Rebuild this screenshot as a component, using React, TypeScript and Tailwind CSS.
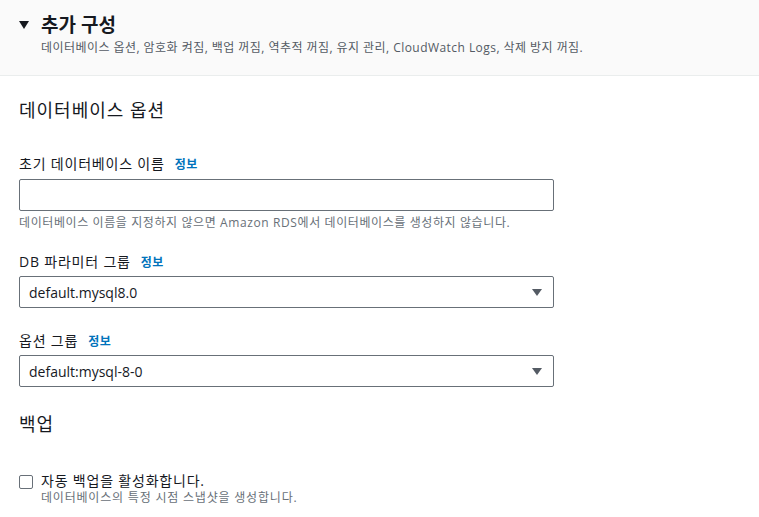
import React from "react";

const font = { fontFamily: '"Open Sans", "Noto Sans CJK KR", sans-serif' };

function InfoLink() {
  return <span className="ml-[10px] text-[12px] font-bold tracking-[0.5px] text-[#0073bb]">정보</span>;
}

function Label({ children }: { children: React.ReactNode }) {
  return (
    <div className="flex items-baseline h-[20px] leading-[20px] text-[14px] tracking-[0.8px] text-[#16191f]">
      {children}
      <InfoLink />
    </div>
  );
}

function SelectBox({ value }: { value: string }) {
  return (
    <div className="mt-[4px] flex h-[32px] w-[535px] items-center justify-between rounded-[2px] border border-[#687078] bg-white pl-[9px] pr-[11px] text-[14px] text-[#16191f]">
      <span>{value}</span>
      <svg width="10" height="7" viewBox="0 0 10 7">
        <path d="M0 0 H10 L5 7 Z" fill="#545b64" />
      </svg>
    </div>
  );
}

export default function App() {
  return (
    <div className="min-h-[517px] w-[759px] bg-white" style={font}>
      {/* Header */}
      <div className="h-[76px] border-b border-[#eaeded] bg-[#fafafa] pl-[19px] pt-[12px]">
        <div className="flex items-center">
          <svg width="10" height="8" viewBox="0 0 10 8" className="mr-[12px]">
            <path d="M0 0 H10 L5 8 Z" fill="#16191f" />
          </svg>
          <span className="text-[19px] font-bold leading-[26px] text-[#16191f]">추가 구성</span>
        </div>
        <div className="ml-[22px] mt-[2px] text-[12px] leading-[16px] tracking-[0.45px] text-[#545b64]">
          데이터베이스 옵션, 암호화 켜짐, 백업 꺼짐, 역추적 꺼짐, 유지 관리, CloudWatch Logs, 삭제 방지 꺼짐.
        </div>
      </div>

      <div className="pl-[19px]">
        <div className="pt-[21px] text-[18px] leading-[26px] tracking-[1px] text-[#16191f]">데이터베이스 옵션</div>

        <div className="mt-[31px]">
          <Label>초기 데이터베이스 이름</Label>
          <div className="mt-[5px] h-[32px] w-[535px] rounded-[2px] border border-[#687078] bg-white" />
          <div className="mt-[4px] text-[12px] leading-[16px] tracking-[0.6px] text-[#687078]">
            데이터베이스 이름을 지정하지 않으면 Amazon RDS에서 데이터베이스를 생성하지 않습니다.
          </div>
        </div>

        <div className="mt-[21px]">
          <Label>DB 파라미터 그룹</Label>
          <SelectBox value="default.mysql8.0" />
        </div>

        <div className="mt-[23px]">
          <Label>옵션 그룹</Label>
          <SelectBox value="default:mysql-8-0" />
        </div>

        <div className="pt-[24px] text-[18px] leading-[26px] tracking-[1px] text-[#16191f]">백업</div>

        <div className="mt-[35px] flex items-start">
          <div className="mt-[3px] h-[14px] w-[14px] rounded-[2px] border border-[#687078] bg-white" />
          <div className="ml-[8px]">
            <div className="text-[14px] leading-[18px] tracking-[0.8px] text-[#16191f]">자동 백업을 활성화합니다.</div>
            <div className="text-[12px] leading-[15px] tracking-[0.8px] text-[#687078]">데이터베이스의 특정 시점 스냅샷을 생성합니다.</div>
          </div>
        </div>
      </div>
    </div>
  );
}
